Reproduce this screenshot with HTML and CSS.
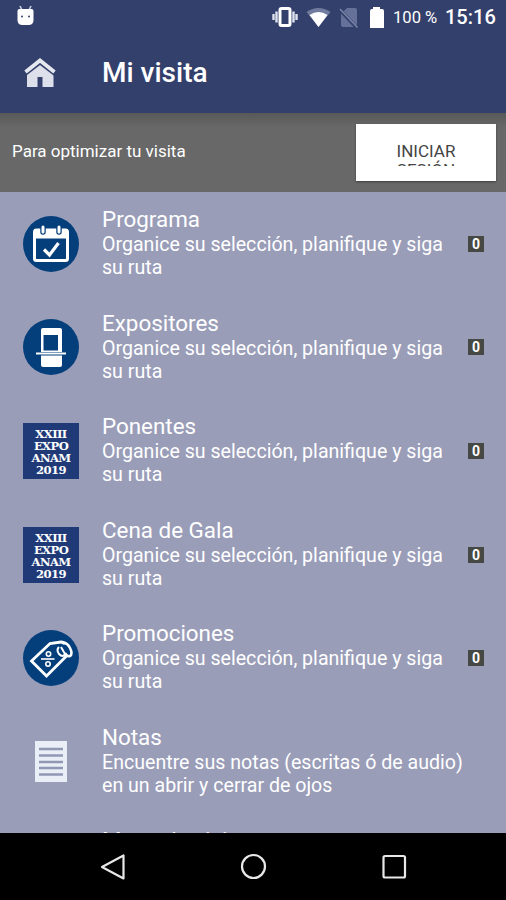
FILE: index.html
```html
<!DOCTYPE html>
<html lang="es">

<head>
    <meta charset="UTF-8">
    <meta name="viewport" content="width=device-width, initial-scale=1.0">
    <title>Mi visita</title>
    <link rel="stylesheet" href="styles.css">
</head>

<body>
    <div class="screen">
        <header class="header">
            <div class="status-bar">
                <svg class="droid" width="20" height="24" viewBox="0 0 20 24">
                    <path d="M4 1l2 4M15 1l-2 4" stroke="#c9cfe4" stroke-width="1.6" />
                    <path d="M1.500 6q0-2 2-2h12q2 0 2 2v9q0 5-5 5h-6q-5 0-5-5z" fill="#fff" />
                    <circle cx="6" cy="11.500" r="1" fill="#33406c" />
                    <circle cx="13" cy="11.500" r="1" fill="#33406c" />
                </svg>
                <div class="status-icons">
                    <svg width="113" height="24" viewBox="0 0 113 24">
                        <path d="M1.500 9v6M4.500 6.500v11M21.500 6.500v11M24.500 9v6" stroke="#dfe3ee" stroke-width="2.400" />
                        <rect x="8" y="3.500" width="10" height="17" rx="1.500" fill="none" stroke="#fff" stroke-width="3" />
                        <path d="M34.500 7Q46.500-1 58.500 7L46.500 22z" fill="#717b9e" />
                        <path d="M37.500 10Q46.500 4 55.500 10L46.500 22z" fill="#fff" />
                        <path d="M75 3h8q2 0 2 2v17H71q-2 0-2-2V9z" fill="#66719a" />
                        <path d="M67.500 4.500L86 24" stroke="#33406c" stroke-width="3.500" />
                        <path d="M68 4l17.500 18.500" stroke="#7b85a7" stroke-width="1.500" />
                        <path d="M101 2h7v2h2q2 0 2 2v17H98V6q0-2 2-2h1z" fill="#fff" />
                    </svg>
                    <span class="battery">100 %</span>
                    <span class="clock">15:16</span>
                </div>
            </div>
            <div class="toolbar">
                <svg class="home" width="32" height="32" viewBox="0 0 32 32">
                    <path d="M3 17L16 7l13.500 10V31H18.500v-10h-5v10H3z" fill="#dde0ea" />
                    <path d="M1 19L16 7.500 31 19" fill="none" stroke="#33406c" stroke-width="2.500" />
                    <path d="M1.500 16L16 4.500l14.500 11.500" fill="none" stroke="#e6e8ef" stroke-width="3.800" />
                </svg>
                <h1>Mi visita</h1>
            </div>
        </header>

        <div class="login">
            <p>Para optimizar tu visita</p>
            <button type="button"><span>INICIAR<br>SESIÓN</span></button>
        </div>

        <main class="list">
            <div class="item">
                <div class="icon">
                    <svg width="56" height="56" viewBox="0 0 56 56">
                        <circle cx="28" cy="28" r="28" fill="#053f7b" />
                        <rect x="11.500" y="14" width="33" height="30.500" rx="2" fill="none" stroke="#fff" stroke-width="3" />
                        <path d="M11 13h34v9.500H11z" fill="#fff" />
                        <path d="M20 11v5M36 11v5" stroke="#053f7b" stroke-width="5.500" stroke-linecap="round" />
                        <path d="M20 11v5M36 11v5" stroke="#fff" stroke-width="3" stroke-linecap="round" />
                        <path d="M21 33.500l5.500 5.500 9-12" fill="none" stroke="#fff" stroke-width="3.200" />
                    </svg>
                </div>
                <div class="text">
                    <h2>Programa</h2>
                    <p>Organice su selección, planifique y siga<br>su ruta</p>
                </div>
                <span class="count">0</span>
            </div>
            <div class="item">
                <div class="icon">
                    <svg width="56" height="56" viewBox="0 0 56 56">
                        <circle cx="28" cy="28" r="28" fill="#053f7b" />
                        <path d="M20 9h17q2 0 2 2v22H18V11q0-2 2-2zM20.500 16v15.500h14.500V16z" fill="#fff" fill-rule="evenodd" />
                        <path d="M13 34.500h30" stroke="#fff" stroke-width="2" />
                        <path d="M18 36.500h21V46q0 2-2 2H20q-2 0-2-2z" fill="#fff" />
                    </svg>
                </div>
                <div class="text">
                    <h2>Expositores</h2>
                    <p>Organice su selección, planifique y siga<br>su ruta</p>
                </div>
                <span class="count">0</span>
            </div>
            <div class="item">
                <div class="icon">
                    <div class="expo"><span>XXIII</span><span>EXPO</span><span>ANAM</span><span>2019</span></div>
                </div>
                <div class="text">
                    <h2>Ponentes</h2>
                    <p>Organice su selección, planifique y siga<br>su ruta</p>
                </div>
                <span class="count">0</span>
            </div>
            <div class="item">
                <div class="icon">
                    <div class="expo"><span>XXIII</span><span>EXPO</span><span>ANAM</span><span>2019</span></div>
                </div>
                <div class="text">
                    <h2>Cena de Gala</h2>
                    <p>Organice su selección, planifique y siga<br>su ruta</p>
                </div>
                <span class="count">0</span>
            </div>
            <div class="item">
                <div class="icon">
                    <svg width="56" height="56" viewBox="0 0 56 56">
                        <circle cx="28" cy="28" r="28" fill="#053f7b" />
                        <g fill="none" stroke="#fff">
                            <path d="M42 14q-1-2-4-2l-11 1.500L8.500 31 23.500 46 43.500 26" stroke-width="2.800" />
                            <path d="M36 17q-3 3 0 7 4 4 6 0l-4-7" stroke-width="2" />
                            <path d="M39 13q5-1 8 5 3 6 0 8-3 1-5-3" stroke-width="2.600" />
                            <path d="M18 29h13.500" stroke-width="1.600" />
                            <circle cx="25.500" cy="24" r="2.200" stroke-width="1.600" />
                            <circle cx="25" cy="34" r="2.200" stroke-width="1.600" />
                        </g>
                    </svg>
                </div>
                <div class="text">
                    <h2>Promociones</h2>
                    <p>Organice su selección, planifique y siga<br>su ruta</p>
                </div>
                <span class="count">0</span>
            </div>
            <div class="item">
                <div class="icon">
                    <svg width="32" height="41" viewBox="0 0 32 41">
                        <path d="M0 0h32v41H0z" fill="#eaeef6" />
                        <path d="M4 8h24M4 14.500h24M4 21h24M4 27h24M4 33.500h24" stroke="#9198b5" stroke-width="2.600" />
                    </svg>
                </div>
                <div class="text">
                    <h2>Notas</h2>
                    <p>Encuentre sus notas (escritas ó de audio)<br>en un abrir y cerrar de ojos</p>
                </div>
            </div>
            <div class="item">
                <div class="icon"></div>
                <div class="text">
                    <h2>Mapa de visita</h2>
                </div>
            </div>
        </main>

        <nav class="navbar">
            <svg width="28" height="28" viewBox="0 0 28 28">
                <path d="M25.500 2.500v23L4 14z" />
            </svg>
            <svg width="28" height="28" viewBox="0 0 28 28">
                <circle cx="14.500" cy="13.500" r="11.500" />
            </svg>
            <svg width="28" height="28" viewBox="0 0 28 28">
                <rect x="3.500" y="3" width="21.500" height="21.500" rx="1.500" />
            </svg>
        </nav>
    </div>
</body>

</html>
```

FILE: styles.css
```css
* {
    box-sizing: border-box;
}

body {
    margin: 0;
    font-family: Roboto, "Noto Sans", sans-serif;
    color: #fff;
    background-color: #000;
}

h1,
h2,
p {
    margin: 0;
    font-weight: 400;
}

svg {
    display: block;
    flex: none;
}

.screen {
    display: flex;
    flex-direction: column;
    width: 506px;
    height: 900px;
    overflow: hidden;
}

/* Header */
.header {
    flex: none;
    height: 113px;
    background-color: #33406c;
}

.status-bar {
    display: flex;
    justify-content: space-between;
    height: 33px;
    padding: 5px 10px 0 16px;
}

.status-icons {
    display: flex;
    align-items: center;
    height: 24px;
}

.battery {
    width: 47px;
    margin-left: 8px;
    font-size: 16.6px;
    white-space: nowrap;
}

.clock {
    width: 51px;
    margin-left: 5px;
    font-size: 20px;
    font-weight: 500;
}

.toolbar {
    display: flex;
    align-items: center;
    height: 78px;
    padding-left: 24px;
}

.toolbar h1 {
    margin-left: 46px;
    font-size: 28px;
    font-weight: 500;
}

/* Login strip */
.login {
    display: flex;
    flex: none;
    align-items: center;
    justify-content: space-between;
    height: 79px;
    padding: 0 10px 0 12px;
    background: linear-gradient(#585858, #686868 14px);
}

.login p {
    padding-bottom: 3px;
    font-size: 17px;
}

.login button {
    width: 140px;
    height: 57px;
    padding: 0;
    border: none;
    background-color: #fff;
    box-shadow: 0 1px 2px rgba(0, 0, 0, 0.4);
    color: #444;
    font-family: inherit;
    font-size: 17px;
    line-height: 19px;
}

.login button span {
    display: block;
    height: 24px;
    margin-top: 2px;
    overflow: hidden;
}

/* List */
.list {
    flex: 1;
    min-height: 0;
    overflow: hidden;
    background-color: #9a9db8;
}

.item {
    display: flex;
    align-items: center;
    height: 103.6px;
    padding-right: 22px;
}

.icon {
    display: flex;
    flex: none;
    justify-content: center;
    width: 102px;
}

.text {
    flex: 1;
    align-self: flex-start;
    padding-top: 14px;
    white-space: nowrap;
}

.text h2 {
    font-size: 22.4px;
    line-height: 27px;
}

.text p {
    font-size: 19.6px;
    line-height: 23px;
}

.item:last-child .text {
    padding-top: 13px;
}

.count {
    width: 16px;
    height: 16px;
    background-color: #464844;
    font-size: 14px;
    font-weight: 700;
    line-height: 16px;
    text-align: center;
}

.expo {
    display: flex;
    flex-direction: column;
    align-items: center;
    width: 56px;
    height: 56px;
    padding-top: 5px;
    background-color: #203a78;
    font-family: "DejaVu Serif", serif;
    font-size: 11.6px;
    font-weight: 700;
    letter-spacing: -0.6px;
    line-height: 12px;
}

/* Android navigation */
.navbar {
    display: flex;
    flex: none;
    align-items: center;
    justify-content: space-between;
    height: 67px;
    padding: 0 98px;
    background-color: #000;
}

.navbar svg {
    fill: none;
    stroke: #e8e8e8;
    stroke-width: 2.2;
    stroke-linejoin: round;
}
```
